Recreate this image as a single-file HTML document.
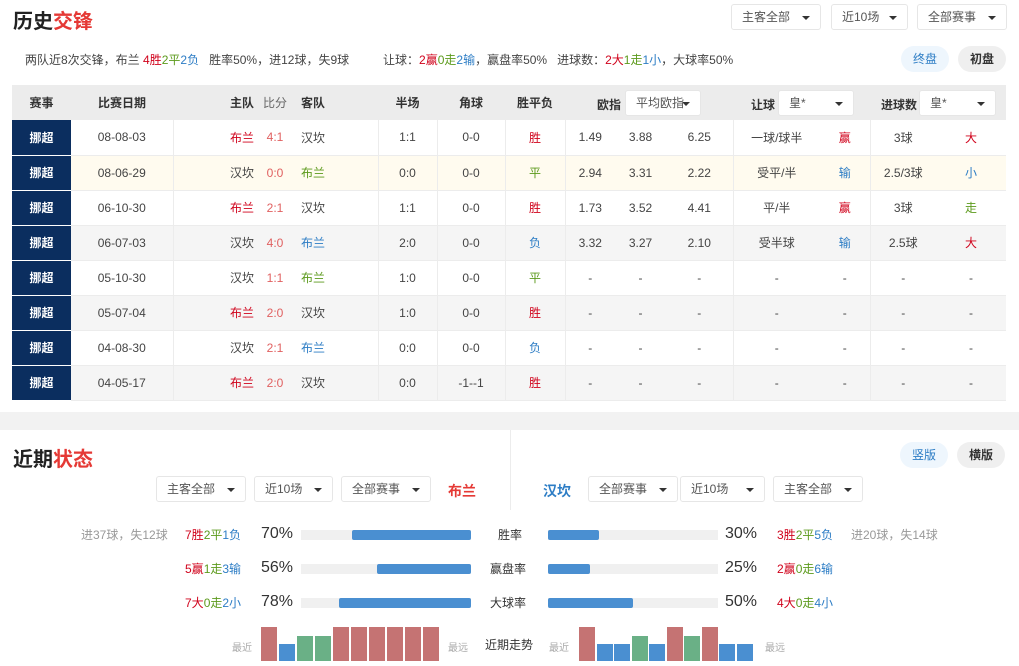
<!DOCTYPE html>
<html><head><meta charset="utf-8"><style>
*{margin:0;padding:0;box-sizing:border-box}
body{width:1019px;height:666px;background:#f2f2f2;font-family:"Liberation Sans","Noto Sans CJK SC",sans-serif;font-size:12px;color:#333;position:relative;overflow:hidden}
.a{position:absolute}
.sec{background:#fff;position:absolute;left:0;width:1019px}
.r{color:#d0021b}.g{color:#5c9a1c}.b{color:#2d7dc5}.gr{color:#999}
.sel{position:absolute;height:26px;border:1px solid #e6e6e6;border-radius:3px;background:#fff;font-size:12px;color:#555;line-height:24px;padding-left:10px;font-weight:normal;text-align:left}
.sel:after{content:"";position:absolute;right:10px;top:11px;border:4px solid transparent;border-top:4px solid #333;border-bottom:0}
.btn{position:absolute;height:26px;border-radius:13px;line-height:26px;text-align:center;font-size:12px;width:48px}
table{position:absolute;left:12px;top:85px;width:994px;border-collapse:collapse;table-layout:fixed}
td{height:35px;text-align:center;border-bottom:1px solid #ececec;font-size:12px;color:#444;white-space:nowrap}
tr.h td{background:#ececec;font-weight:bold;color:#333;border:0}
td.l{background:#0b2e5f;color:#fff;font-weight:bold;border-bottom:1px solid #fff}
.br{border-right:1px solid #ececec}
tr.c td:not(.l){background:#fffbef}
tr.s td:not(.l){background:#f5f5f5}
.bar{position:absolute;height:10px;background:#f0f0f0}
.bar i{position:absolute;top:0;height:10px;background:#4a8fd1;border-radius:2px}
.k{position:absolute;bottom:0;width:16px}
.kr{background:#c57373}.kb{background:#4a8fd1}.kg{background:#6ab086}
.hd{position:absolute;top:96px;font-weight:bold;color:#333;font-size:12px}
</style></head><body>
<div class="sec" style="top:0;height:412px">
<div class="a" style="left:13px;top:5px;font-size:20px;font-weight:bold;color:#222">历史<span style="color:#e53935">交锋</span></div>
<div class="sel" style="left:731px;top:4px;width:90px">主客全部</div>
<div class="sel" style="left:831px;top:4px;width:77px">近10场</div>
<div class="sel" style="left:917px;top:4px;width:90px">全部赛事</div>
<div class="a" style="left:25px;top:51px;color:#444">两队近8次交锋，布兰 <span class="r">4胜</span><span class="g">2平</span><span class="b">2负</span>&nbsp;&nbsp;&nbsp;胜率50%，进12球，失9球</div>
<div class="a" style="left:383px;top:51px;color:#444">让球：<span class="r">2赢</span><span class="g">0走</span><span class="b">2输</span>，赢盘率50%&nbsp;&nbsp;&nbsp;进球数：<span class="r">2大</span><span class="g">1走</span><span class="b">1小</span>，大球率50%</div>
<div class="btn" style="left:901px;top:46px;background:#eef6fd;color:#2d7dc5">终盘</div>
<div class="btn" style="left:958px;top:46px;background:#efefef;color:#333;font-weight:bold">初盘</div>
<table>
<colgroup><col style="width:59px"><col style="width:102px"><col style="width:85px"><col style="width:34px"><col style="width:40px"><col style="width:46px"><col style="width:59px"><col style="width:68px"><col style="width:60px"><col style="width:50px"><col style="width:51px"><col style="width:67px"><col style="width:87px"><col style="width:50px"><col style="width:66px"><col style="width:70px"></colgroup>
<tr class="h"><td>赛事</td><td>比赛日期</td><td style="text-align:right;padding-right:4px">主队</td><td style="font-weight:normal;color:#666">比分</td><td style="text-align:left;padding-left:9px">客队</td><td></td><td>半场</td><td>角球</td><td>胜平负</td><td colspan="3"></td><td colspan="2"></td><td colspan="2"></td></tr>
<tr><td class="l">挪超</td><td class="br">08-08-03</td><td class="r" style="text-align:right;padding-right:4px">布兰</td><td style="color:#e06060">4:1</td><td style="text-align:left;padding-left:9px">汉坎</td><td class="br"></td><td class="br">1:1</td><td class="br">0-0</td><td class="br r">胜</td><td>1.49</td><td>3.88</td><td class="br">6.25</td><td>一球/球半</td><td class="br r">赢</td><td>3球</td><td class="r">大</td></tr>
<tr class="c"><td class="l">挪超</td><td class="br">08-06-29</td><td style="text-align:right;padding-right:4px">汉坎</td><td style="color:#e06060">0:0</td><td class="g" style="text-align:left;padding-left:9px">布兰</td><td class="br"></td><td class="br">0:0</td><td class="br">0-0</td><td class="br g">平</td><td>2.94</td><td>3.31</td><td class="br">2.22</td><td>受平/半</td><td class="br b">输</td><td>2.5/3球</td><td class="b">小</td></tr>
<tr><td class="l">挪超</td><td class="br">06-10-30</td><td class="r" style="text-align:right;padding-right:4px">布兰</td><td style="color:#e06060">2:1</td><td style="text-align:left;padding-left:9px">汉坎</td><td class="br"></td><td class="br">1:1</td><td class="br">0-0</td><td class="br r">胜</td><td>1.73</td><td>3.52</td><td class="br">4.41</td><td>平/半</td><td class="br r">赢</td><td>3球</td><td class="g">走</td></tr>
<tr class="s"><td class="l">挪超</td><td class="br">06-07-03</td><td style="text-align:right;padding-right:4px">汉坎</td><td style="color:#e06060">4:0</td><td class="b" style="text-align:left;padding-left:9px">布兰</td><td class="br"></td><td class="br">2:0</td><td class="br">0-0</td><td class="br b">负</td><td>3.32</td><td>3.27</td><td class="br">2.10</td><td>受半球</td><td class="br b">输</td><td>2.5球</td><td class="r">大</td></tr>
<tr><td class="l">挪超</td><td class="br">05-10-30</td><td style="text-align:right;padding-right:4px">汉坎</td><td style="color:#e06060">1:1</td><td class="g" style="text-align:left;padding-left:9px">布兰</td><td class="br"></td><td class="br">1:0</td><td class="br">0-0</td><td class="br g">平</td><td>-</td><td>-</td><td class="br">-</td><td>-</td><td class="br">-</td><td>-</td><td>-</td></tr>
<tr class="s"><td class="l">挪超</td><td class="br">05-07-04</td><td class="r" style="text-align:right;padding-right:4px">布兰</td><td style="color:#e06060">2:0</td><td style="text-align:left;padding-left:9px">汉坎</td><td class="br"></td><td class="br">1:0</td><td class="br">0-0</td><td class="br r">胜</td><td>-</td><td>-</td><td class="br">-</td><td>-</td><td class="br">-</td><td>-</td><td>-</td></tr>
<tr><td class="l">挪超</td><td class="br">04-08-30</td><td style="text-align:right;padding-right:4px">汉坎</td><td style="color:#e06060">2:1</td><td class="b" style="text-align:left;padding-left:9px">布兰</td><td class="br"></td><td class="br">0:0</td><td class="br">0-0</td><td class="br b">负</td><td>-</td><td>-</td><td class="br">-</td><td>-</td><td class="br">-</td><td>-</td><td>-</td></tr>
<tr class="s"><td class="l">挪超</td><td class="br">04-05-17</td><td class="r" style="text-align:right;padding-right:4px">布兰</td><td style="color:#e06060">2:0</td><td style="text-align:left;padding-left:9px">汉坎</td><td class="br"></td><td class="br">0:0</td><td class="br">-1--1</td><td class="br r">胜</td><td>-</td><td>-</td><td class="br">-</td><td>-</td><td class="br">-</td><td>-</td><td>-</td></tr>
</table>
<div class="hd" style="left:597px">欧指</div>
<div class="sel" style="left:625px;top:90px;width:76px">平均欧指</div>
<div class="hd" style="left:751px">让球</div>
<div class="sel" style="left:778px;top:90px;width:76px">皇*</div>
<div class="hd" style="left:881px">进球数</div>
<div class="sel" style="left:919px;top:90px;width:77px">皇*</div>
</div>
<div class="sec" style="top:430px;height:236px">
<div class="a" style="left:510px;top:0;width:1px;height:80px;background:#ececec"></div>
<div class="a" style="left:13px;top:13px;font-size:20px;font-weight:bold;color:#222">近期<span style="color:#e53935">状态</span></div>
<div class="btn" style="left:900px;top:12px;background:#eef6fd;color:#2d7dc5">竖版</div>
<div class="btn" style="left:957px;top:12px;background:#efefef;color:#333;font-weight:bold">横版</div>
<div class="sel" style="left:156px;top:46px;width:90px">主客全部</div>
<div class="sel" style="left:254px;top:46px;width:79px">近10场</div>
<div class="sel" style="left:341px;top:46px;width:90px">全部赛事</div>
<div class="a" style="left:448px;top:51px;font-size:14px;font-weight:bold;color:#e53935">布兰</div>
<div class="a" style="left:543px;top:51px;font-size:14px;font-weight:bold;color:#2d7dc5">汉坎</div>
<div class="sel" style="left:588px;top:46px;width:90px">全部赛事</div>
<div class="sel" style="left:680px;top:46px;width:85px">近10场</div>
<div class="sel" style="left:773px;top:46px;width:90px">主客全部</div>
<div class="a gr" style="left:81px;top:96px">进37球，失12球</div>
<div class="a" style="left:185px;top:96px"><span class="r">7胜</span><span class="g">2平</span><span class="b">1负</span></div>
<div class="a" style="left:185px;top:130px"><span class="r">5赢</span><span class="g">1走</span><span class="b">3输</span></div>
<div class="a" style="left:185px;top:164px"><span class="r">7大</span><span class="g">0走</span><span class="b">2小</span></div>
<div class="a" style="left:261px;top:95px;font-size:16px;color:#333">70%</div>
<div class="a" style="left:261px;top:129px;font-size:16px;color:#333">56%</div>
<div class="a" style="left:261px;top:163px;font-size:16px;color:#333">78%</div>
<div class="bar" style="left:301px;top:100px;width:170px"><i style="left:51px;width:119px"></i></div>
<div class="bar" style="left:301px;top:134px;width:170px"><i style="left:76px;width:94px"></i></div>
<div class="bar" style="left:301px;top:168px;width:170px"><i style="left:38px;width:132px"></i></div>
<div class="a" style="left:498px;top:96px">胜率</div>
<div class="a" style="left:490px;top:130px">赢盘率</div>
<div class="a" style="left:490px;top:164px">大球率</div>
<div class="bar" style="left:548px;top:100px;width:170px"><i style="left:0;width:51px"></i></div>
<div class="bar" style="left:548px;top:134px;width:170px"><i style="left:0;width:42px"></i></div>
<div class="bar" style="left:548px;top:168px;width:170px"><i style="left:0;width:85px"></i></div>
<div class="a" style="left:725px;top:95px;font-size:16px;color:#333">30%</div>
<div class="a" style="left:725px;top:129px;font-size:16px;color:#333">25%</div>
<div class="a" style="left:725px;top:163px;font-size:16px;color:#333">50%</div>
<div class="a" style="left:777px;top:96px"><span class="r">3胜</span><span class="g">2平</span><span class="b">5负</span></div>
<div class="a gr" style="left:851px;top:96px">进20球，失14球</div>
<div class="a" style="left:777px;top:130px"><span class="r">2赢</span><span class="g">0走</span><span class="b">6输</span></div>
<div class="a" style="left:777px;top:164px"><span class="r">4大</span><span class="g">0走</span><span class="b">4小</span></div>
<div class="a" style="left:232px;top:209px;font-size:10px;color:#aaa">最近</div>
<div class="a" style="left:448px;top:209px;font-size:10px;color:#aaa">最远</div>
<div class="a" style="left:485px;top:206px">近期走势</div>
<div class="a" style="left:549px;top:209px;font-size:10px;color:#aaa">最近</div>
<div class="a" style="left:765px;top:209px;font-size:10px;color:#aaa">最远</div>
<div class="a" style="left:261px;top:196px;width:180px;height:35px">
<i class="k kr" style="left:0;height:34px"></i><i class="k kb" style="left:18px;height:17px"></i><i class="k kg" style="left:36px;height:25px"></i><i class="k kg" style="left:54px;height:25px"></i><i class="k kr" style="left:72px;height:34px"></i><i class="k kr" style="left:90px;height:34px"></i><i class="k kr" style="left:108px;height:34px"></i><i class="k kr" style="left:126px;height:34px"></i><i class="k kr" style="left:144px;height:34px"></i><i class="k kr" style="left:162px;height:34px"></i></div>
<div class="a" style="left:579px;top:196px;width:180px;height:35px">
<i class="k kr" style="left:0;height:34px"></i><i class="k kb" style="left:18px;height:17px"></i><i class="k kb" style="left:35px;height:17px"></i><i class="k kg" style="left:53px;height:25px"></i><i class="k kb" style="left:70px;height:17px"></i><i class="k kr" style="left:88px;height:34px"></i><i class="k kg" style="left:105px;height:25px"></i><i class="k kr" style="left:123px;height:34px"></i><i class="k kb" style="left:140px;height:17px"></i><i class="k kb" style="left:158px;height:17px"></i></div>
</div>
</body></html>
